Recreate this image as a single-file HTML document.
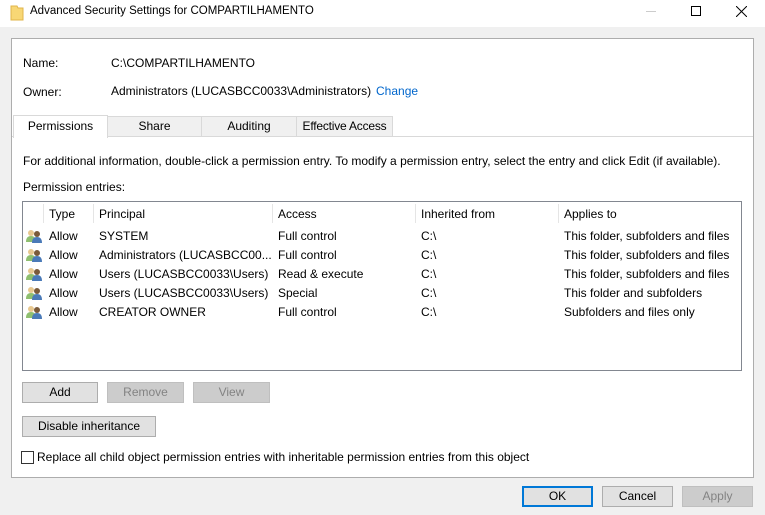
<!DOCTYPE html><html><head><style>
*{margin:0;padding:0;box-sizing:border-box}
body{width:765px;height:515px;background:#f0f0f0;font-family:"Liberation Sans",sans-serif;font-size:12px;color:#000;position:relative;overflow:hidden}
.a{position:absolute;white-space:nowrap}
.btn{position:absolute;height:21px;background:#e1e1e1;border:1px solid #adadad;text-align:center;line-height:19px}
.dis{background:#cccccc;border-color:#bfbfbf;color:#838383}
.tab{position:absolute;top:116px;height:21px;background:#f0f0f0;border:1px solid #d9d9d9;text-align:center;line-height:19px}
.sep{position:absolute;top:204px;width:1px;height:19px;background:#e5e5e5}
</style></head><body>
<div class="a" style="left:0;top:0;width:765px;height:27px;background:#fff"></div>
<svg class="a" style="left:10px;top:5px" width="14" height="16"><path d="M1 1h6l1 2h5v12H1z" fill="#f8d775" stroke="#e0b44a"/></svg>
<div class="a" style="left:30px;top:5px;font-size:11.5px">Advanced Security Settings for COMPARTILHAMENTO</div>
<div class="a" style="left:646px;top:11px;width:10px;height:1px;background:#ccc"></div>
<div class="a" style="left:691px;top:6px;width:10px;height:10px;border:1px solid #000"></div>
<svg class="a" style="left:736px;top:6px" width="11" height="11"><path d="M0 0L11 11M11 0L0 11" stroke="#000"/></svg>
<div class="a" style="left:11px;top:38px;width:743px;height:440px;background:#fff;border:1px solid #adadad"></div>
<div class="a" style="left:12px;top:39px;width:741px;height:97px;background:#fff"></div>
<div class="a" style="left:23px;top:56px">Name:</div>
<div class="a" style="left:111px;top:56px">C:\COMPARTILHAMENTO</div>
<div class="a" style="left:23px;top:85px">Owner:</div>
<div class="a" style="left:111px;top:84px">Administrators (LUCASBCC0033\Administrators)</div>
<div class="a" style="left:376px;top:84px;color:#0066cc">Change</div>
<div class="a" style="left:12px;top:136px;width:741px;height:1px;background:#d9d9d9"></div>
<div class="tab" style="left:107px;width:95px">Share</div>
<div class="tab" style="left:201px;width:96px">Auditing</div>
<div class="tab" style="left:296px;width:97px;letter-spacing:-0.2px">Effective Access</div>
<div class="tab" style="left:13px;top:115px;height:23px;width:95px;background:#fff;border-bottom:none;line-height:21px">Permissions</div>
<div class="a" style="left:23px;top:154px">For additional information, double-click a permission entry. To modify a permission entry, select the entry and click Edit (if available).</div>
<div class="a" style="left:23px;top:180px">Permission entries:</div>
<div class="a" style="left:22px;top:201px;width:720px;height:170px;border:1px solid #828790;background:#fff"></div>
<div class="sep" style="left:43px"></div><div class="sep" style="left:93px"></div><div class="sep" style="left:272px"></div><div class="sep" style="left:415px"></div><div class="sep" style="left:558px"></div>
<div class="a" style="left:49px;top:207px">Type</div>
<div class="a" style="left:99px;top:207px">Principal</div>
<div class="a" style="left:278px;top:207px">Access</div>
<div class="a" style="left:421px;top:207px">Inherited from</div>
<div class="a" style="left:564px;top:207px">Applies to</div>
<div class="a" style="left:26px;top:229px;line-height:19px">
<svg width="16" height="95"><g id="u"><circle cx="5" cy="4" r="3" fill="#e8c890"/><path d="M0 13q0-6 5-6t5 6z" fill="#8fbf70"/><circle cx="11" cy="5" r="3" fill="#7a5a3a"/><path d="M6 14q0-6 5-6t5 6z" fill="#4a7ab8"/></g><use href="#u" y="19"/><use href="#u" y="38"/><use href="#u" y="57"/><use href="#u" y="76"/></svg></div>
<div class="a" style="left:49px;top:227px;line-height:19px">Allow<br>Allow<br>Allow<br>Allow<br>Allow</div>
<div class="a" style="left:99px;top:227px;line-height:19px">SYSTEM<br>Administrators (LUCASBCC00...<br>Users (LUCASBCC0033\Users)<br>Users (LUCASBCC0033\Users)<br>CREATOR OWNER</div>
<div class="a" style="left:278px;top:227px;line-height:19px">Full control<br>Full control<br>Read &amp; execute<br>Special<br>Full control</div>
<div class="a" style="left:421px;top:227px;line-height:19px">C:\<br>C:\<br>C:\<br>C:\<br>C:\</div>
<div class="a" style="left:564px;top:227px;line-height:19px">This folder, subfolders and files<br>This folder, subfolders and files<br>This folder, subfolders and files<br>This folder and subfolders<br>Subfolders and files only</div>
<div class="btn" style="left:22px;top:382px;width:76px">Add</div>
<div class="btn dis" style="left:107px;top:382px;width:77px">Remove</div>
<div class="btn dis" style="left:193px;top:382px;width:77px">View</div>
<div class="btn" style="left:22px;top:416px;width:134px">Disable inheritance</div>
<div class="a" style="left:21px;top:451px;width:13px;height:13px;border:1px solid #333;background:#fff"></div>
<div class="a" style="left:37px;top:450px">Replace all child object permission entries with inheritable permission entries from this object</div>
<div class="btn" style="left:522px;top:486px;width:71px;border:2px solid #0078d7;line-height:17px">OK</div>
<div class="btn" style="left:602px;top:486px;width:71px">Cancel</div>
<div class="btn dis" style="left:682px;top:486px;width:71px">Apply</div>
</body></html>
